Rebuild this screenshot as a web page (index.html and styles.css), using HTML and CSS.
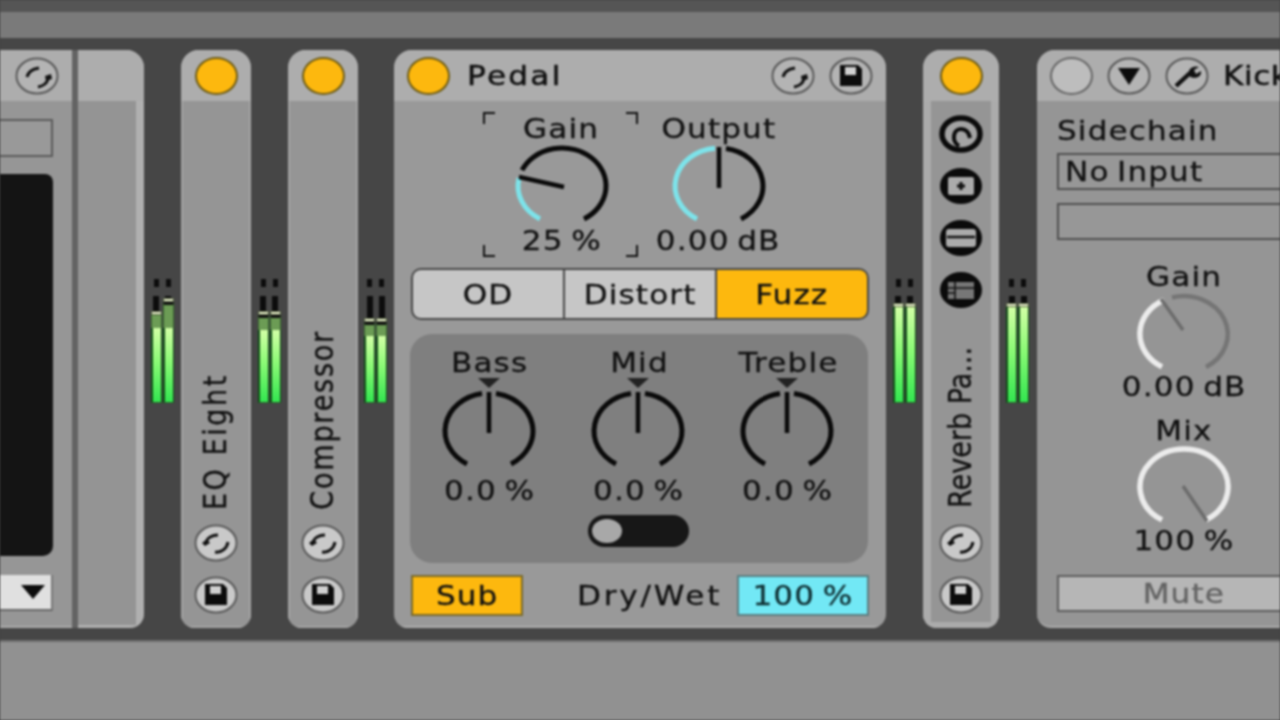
FILE: index.html
```html
<!DOCTYPE html>
<html lang="en">
<head>
<meta charset="utf-8">
<title>Pedal device chain</title>
<link rel="stylesheet" href="styles.css">
</head>
<body>
<svg class="defs" aria-hidden="true">
  <symbol id="swap" viewBox="0 0 44 38">
    <ellipse cx="22" cy="19" rx="20.5" ry="17.5" fill="currentColor" stroke="#5a5a5a" stroke-width="2"/>
    <path d="M12 18C13 14 18 11 24 11" fill="none" stroke="#111" stroke-width="3"/>
    <path d="M21 28C28 29 33 24 34 18" fill="none" stroke="#111" stroke-width="3"/>
    <path d="M8 19l5-4 3 4-5 3z" fill="#111"/>
  </symbol>
  <symbol id="swap2" viewBox="0 0 44 38">
    <ellipse cx="22" cy="19" rx="20.5" ry="17.5" fill="currentColor" stroke="#5a5a5a" stroke-width="2"/>
    <path d="M12 20C13 15 18 12 24 11" fill="none" stroke="#111" stroke-width="3"/>
    <path d="M23 30C28 29 32 26 33 22" fill="none" stroke="#111" stroke-width="3"/>
    <path d="M30 19l6-2 1 5-6 2z" fill="#111"/>
  </symbol>
  <symbol id="save" viewBox="0 0 44 38">
    <ellipse cx="22" cy="19" rx="20.5" ry="17.5" fill="currentColor" stroke="#5a5a5a" stroke-width="2"/>
    <path d="M11 8H29L33 12V29H11Z" fill="#0c0c0c"/>
    <rect x="16" y="10" width="11" height="8" fill="#d0d0d0"/>
  </symbol>
  <symbol id="routing" viewBox="0 0 44 38">
    <ellipse cx="22" cy="19" rx="19" ry="16" fill="#a3a3a3" stroke="#0b0b0b" stroke-width="5.5"/>
    <path d="M20 31C12 26 14 14 22 14C27 14 30 18 31 23" fill="none" stroke="#0b0b0b" stroke-width="4"/>
  </symbol>
  <symbol id="plus" viewBox="0 0 44 38">
    <ellipse cx="22" cy="19" rx="21" ry="18" fill="#0b0b0b"/>
    <rect x="9" y="10" width="26" height="18" rx="2" fill="#ababab"/>
    <path d="M18 19H26M22 15V23" stroke="#111" stroke-width="3"/>
  </symbol>
  <symbol id="minus" viewBox="0 0 44 38">
    <ellipse cx="22" cy="19" rx="21" ry="18" fill="#0b0b0b"/>
    <rect x="7" y="10" width="30" height="18" rx="3" fill="#ababab"/>
    <path d="M8 18H36" stroke="#111" stroke-width="2.4"/>
  </symbol>
  <symbol id="table" viewBox="0 0 44 38">
    <ellipse cx="22" cy="19" rx="21" ry="18" fill="#0b0b0b"/>
    <path d="M9 11H35V28H9Z" fill="#777"/>
    <path d="M9 17H35M9 22H16M16 11V28" stroke="#111" stroke-width="1.6"/>
  </symbol>
  <symbol id="fold" viewBox="0 0 44 38">
    <ellipse cx="22" cy="19" rx="20.5" ry="17.5" fill="currentColor" stroke="#5a5a5a" stroke-width="2"/>
    <path d="M11 11H33L22 28Z" fill="#0c0c0c"/>
  </symbol>
  <symbol id="wrench" viewBox="0 0 44 38">
    <ellipse cx="22" cy="19" rx="20.5" ry="17.5" fill="currentColor" stroke="#5a5a5a" stroke-width="2"/>
    <path d="M11 29L25 16" stroke="#111" stroke-width="4.4"/>
    <path d="M24 19C22 12 28 8 34 10L29 13 31 17 36 14C37 20 30 23 24 19Z" fill="#111"/>
  </symbol>
</svg>

<div class="page">
  <div class="strip-dark"></div>
  <div class="strip-mid"></div>

  <div class="rack">
    <div class="clipped">
      <section class="partial">
        <header class="head head-end"><svg class="icon"><use href="#swap2"/></svg></header>
        <div class="partial-body">
          <div class="partial-field"></div>
          <div class="screen"></div>
          <div class="drop"><span class="drop-arrow"></span></div>
        </div>
      </section>
      <section class="folded">
        <header class="head"></header>
        <div class="folded-body"></div>
      </section>
    </div>

    <div class="slot">
      <div class="meter">
        <div class="ch"><i class="tick"></i><i class="blk" style="height:15px"></i><i class="peak"></i><i class="dim" style="height:13px"></i><i class="lit"></i></div>
        <div class="ch"><i class="tick"></i><i class="blk" style="height:2px"></i><i class="peak"></i><i class="dim dim-top" style="height:26px"></i><i class="lit"></i></div>
      </div>
    </div>

    <section class="strip">
      <header class="head head-center"><span class="power"></span></header>
      <div class="strip-body">
        <span class="vname vname-eq">EQ Eight</span>
        <svg class="icon"><use href="#swap"/></svg>
        <svg class="icon"><use href="#save"/></svg>
      </div>
    </section>

    <div class="slot">
      <div class="meter">
        <div class="ch"><i class="tick"></i><i class="blk" style="height:15px"></i><i class="peak"></i><i class="dim dim-top" style="height:15px"></i><i class="lit"></i></div>
        <div class="ch"><i class="tick"></i><i class="blk" style="height:15px"></i><i class="peak"></i><i class="dim dim-top" style="height:15px"></i><i class="lit"></i></div>
      </div>
    </div>

    <section class="strip">
      <header class="head head-center"><span class="power"></span></header>
      <div class="strip-body">
        <span class="vname">Compressor</span>
        <svg class="icon"><use href="#swap"/></svg>
        <svg class="icon"><use href="#save"/></svg>
      </div>
    </section>

    <div class="slot slot-36">
      <div class="meter">
        <div class="ch"><i class="tick"></i><i class="blk" style="height:22px"></i><i class="peak"></i><i class="dim dim-top" style="height:14px"></i><i class="lit"></i></div>
        <div class="ch"><i class="tick"></i><i class="blk" style="height:22px"></i><i class="peak"></i><i class="dim dim-top" style="height:14px"></i><i class="lit"></i></div>
      </div>
    </div>

    <section class="pedal">
      <header class="head pedal-head">
        <span class="power"></span>
        <span class="title"><span class="t t-left">Pedal</span></span>
        <svg class="icon icon-swap"><use href="#swap2"/></svg>
        <svg class="icon"><use href="#save"/></svg>
      </header>
      <div class="pedal-body">
        <div class="macros">
          <div class="knob-col selected">
            <i class="corner tl"></i><i class="corner tr"></i><i class="corner bl"></i><i class="corner br"></i>
            <div class="lbl"><span class="t">Gain</span></div>
            <svg class="knob" viewBox="0 0 100 86">
              <path class="arc-cyan" d="M28 76.9A44 38 0 0 1 7 36"/>
              <path class="arc-dark" d="M10 28.2A44 38 0 1 1 72 76.9"/>
              <path class="needle" d="M52 45L7 35"/>
            </svg>
            <div class="lbl"><span class="t">25 %</span></div>
          </div>
          <div class="knob-col">
            <div class="lbl"><span class="t">Output</span></div>
            <svg class="knob" viewBox="0 0 100 86">
              <path class="arc-cyan" d="M28 76.9A44 38 0 0 1 46 6.2"/>
              <path class="arc-dark" d="M57 6.5A44 38 0 0 1 72 76.9"/>
              <path class="needle" d="M50 5V46"/>
            </svg>
            <div class="lbl"><span class="t">0.00 dB</span></div>
          </div>
        </div>

        <div class="seg">
          <div class="seg-btn"><span class="t">OD</span></div>
          <div class="seg-btn"><span class="t">Distort</span></div>
          <div class="seg-btn seg-on"><span class="t">Fuzz</span></div>
        </div>

        <div class="eq-panel">
          <div class="eq-row">
            <div class="eq-col">
              <div class="lbl"><span class="t">Bass</span></div>
              <svg class="knob" viewBox="0 0 100 86">
                <path class="marker" d="M39 -9H61L50 1Z"/>
                <path class="arc-dark" d="M28 76.9A44 38 0 0 1 43 6.5"/>
                <path class="arc-dark" d="M57 6.5A44 38 0 0 1 72 76.9"/>
                <path class="needle" d="M50 5V46"/>
              </svg>
              <div class="lbl val"><span class="t">0.0 %</span></div>
            </div>
            <div class="eq-col">
              <div class="lbl"><span class="t">Mid</span></div>
              <svg class="knob" viewBox="0 0 100 86">
                <path class="marker" d="M39 -9H61L50 1Z"/>
                <path class="arc-dark" d="M28 76.9A44 38 0 0 1 43 6.5"/>
                <path class="arc-dark" d="M57 6.5A44 38 0 0 1 72 76.9"/>
                <path class="needle" d="M50 5V46"/>
              </svg>
              <div class="lbl val"><span class="t">0.0 %</span></div>
            </div>
            <div class="eq-col">
              <div class="lbl"><span class="t">Treble</span></div>
              <svg class="knob" viewBox="0 0 100 86">
                <path class="marker" d="M39 -9H61L50 1Z"/>
                <path class="arc-dark" d="M28 76.9A44 38 0 0 1 43 6.5"/>
                <path class="arc-dark" d="M57 6.5A44 38 0 0 1 72 76.9"/>
                <path class="needle" d="M50 5V46"/>
              </svg>
              <div class="lbl val"><span class="t">0.0 %</span></div>
            </div>
          </div>
          <div class="toggle"><span class="toggle-thumb"></span></div>
        </div>

        <div class="foot">
          <div class="sub"><span class="t">Sub</span></div>
          <div class="drywet"><span class="t">Dry/Wet</span></div>
          <div class="pct"><span class="t">100 %</span></div>
        </div>
      </div>
    </section>

    <div class="slot">
      <div class="meter">
        <div class="ch"><i class="tick"></i><i class="blk" style="height:7px"></i><i class="peak"></i><i class="dim" style="height:0"></i><i class="lit"></i></div>
        <div class="ch"><i class="tick"></i><i class="blk" style="height:7px"></i><i class="peak"></i><i class="dim" style="height:0"></i><i class="lit"></i></div>
      </div>
    </div>

    <section class="strip strip-wide">
      <header class="head head-center"><span class="power"></span></header>
      <div class="strip-body">
        <div class="chain-tools">
          <svg class="icon"><use href="#routing"/></svg>
          <svg class="icon"><use href="#plus"/></svg>
          <svg class="icon"><use href="#minus"/></svg>
          <svg class="icon"><use href="#table"/></svg>
        </div>
        <span class="vname vname-tight">Reverb Pa...</span>
        <svg class="icon"><use href="#swap"/></svg>
        <svg class="icon"><use href="#save"/></svg>
      </div>
    </section>

    <div class="slot slot-38">
      <div class="meter">
        <div class="ch"><i class="tick"></i><i class="blk" style="height:7px"></i><i class="peak"></i><i class="dim" style="height:0"></i><i class="lit"></i></div>
        <div class="ch"><i class="tick"></i><i class="blk" style="height:7px"></i><i class="peak"></i><i class="dim" style="height:0"></i><i class="lit"></i></div>
      </div>
    </div>

    <section class="kick">
      <header class="head kick-head">
        <span class="power power-off"></span>
        <svg class="icon"><use href="#fold"/></svg>
        <svg class="icon"><use href="#wrench"/></svg>
        <span class="title"><span class="t t-left">Kick</span></span>
      </header>
      <div class="kick-body">
        <div class="side-lbl"><span class="t t-left">Sidechain</span></div>
        <div class="field"><span class="t t-left">No Input</span></div>
        <div class="field field-empty"></div>
        <div class="kick-col">
          <div class="lbl"><span class="t">Gain</span></div>
          <svg class="knob knob-low" viewBox="0 0 100 85">
            <path class="arc-white" d="M28 76.9A44 38 0 0 1 30 10"/>
            <path class="arc-gray" d="M38 7.5A44 38 0 0 1 72 76.9"/>
            <path class="needle-gray" d="M49 40L27 9"/>
          </svg>
          <div class="lbl"><span class="t">0.00 dB</span></div>
          <div class="lbl lbl-gap"><span class="t">Mix</span></div>
          <svg class="knob" viewBox="0 0 100 86">
            <path class="arc-white" d="M28 76.9A44 38 0 1 1 72 76.9"/>
            <path class="needle-gray" d="M49 43L73 78"/>
          </svg>
          <div class="lbl"><span class="t">100 %</span></div>
        </div>
        <div class="mute"><span class="t">Mute</span></div>
      </div>
    </section>
  </div>

  <div class="lower"></div>
</div>
</body>
</html>
```

FILE: styles.css
```css
* { box-sizing: border-box; }
html, body { margin: 0; padding: 0; }
body { width: 1280px; height: 720px; overflow: hidden; background: #444; }
.defs { display: none; }

.page {
  width: 1280px;
  height: 720px;
  display: flex;
  flex-direction: column;
  overflow: hidden;
  background: #464646;
  color: #111;
  font-family: "DejaVu Sans", sans-serif;
  font-size: 27px;
  letter-spacing: 1px;
  word-spacing: -3px;
  -webkit-text-stroke: 0.3px currentColor;
  filter: blur(0.8px);
}
.strip-dark { height: 12px; background: #555; flex: none; }
.strip-mid { height: 26px; background: #7a7a7a; flex: none; }
.lower { flex: 1; background: #919191; border-top: 2px solid #6e6e6e; }

.rack {
  flex: none;
  height: 602px;
  display: flex;
  padding: 12px 0;
  background: #464646;
}

/* text is horizontally stretched in the source */
.t { display: inline-block; transform: scaleX(1.15); white-space: nowrap; }
.t-left { transform-origin: left center; }

.head {
  flex: none;
  height: 51px;
  display: flex;
  align-items: center;
  background: #adadad;
}
.head-end { justify-content: flex-end; padding-right: 13px; }
.head-center { justify-content: center; }

.icon { display: block; width: 44px; height: 38px; flex: none; color: #c9c9c9; }
.head .icon { color: #b4b4b4; }

.power {
  display: block;
  flex: none;
  width: 43px;
  height: 38px;
  border-radius: 50%;
  background: #fdb80e;
  border: 2px solid #6f5c14;
}
.power-off { background: #bdbdbd; border-color: #666; }

/* left partial device + folded panel */
.clipped { flex: none; display: flex; width: 144px; background: #636363; border-radius: 0 18px 14px 0; }
.partial { width: 72px; display: flex; flex-direction: column; background: #969696; border-bottom: 2px solid #aaa; }
.partial-body { flex: 1; display: flex; flex-direction: column; padding: 18px 19px 15px 0; }
.partial-field { height: 38px; background: #999; border: 2px solid #5a5a5a; border-left: 0; }
.screen { flex: 1; margin-top: 17px; background: #141414; border-radius: 0 8px 10px 0; }
.drop { height: 36px; margin-top: 19px; display: flex; align-items: center; justify-content: flex-end; padding-right: 6px; background: #e0e0e0; border-bottom: 2px solid #666; border-right: 2px solid #777; }
.drop-arrow { width: 0; height: 0; border-style: solid; border-width: 14px 12px 0; border-color: #0c0c0c transparent transparent; }
.folded { width: 66px; margin-left: 6px; display: flex; flex-direction: column; background: #b0b0b0; border-radius: 0 18px 14px 0; overflow: hidden; }
.folded-body { flex: 1; background: #949494; margin-right: 8px; margin-bottom: 3px; }

/* meter slots */
.slot { flex: none; width: 37px; display: flex; justify-content: center; padding-top: 229px; }
.slot-36 { width: 36px; }
.slot-38 { width: 38px; }
.meter { width: 24px; height: 124px; display: flex; gap: 1px; padding-right: 1px; }
.ch { width: 11px; display: flex; flex-direction: column; align-items: center; }
.tick { display: block; flex: none; width: 5px; height: 8px; margin-bottom: 9px; background: #0c0c0c; }
.blk { display: block; flex: none; width: 6px; background: #0c0c0c; }
.peak { display: block; flex: none; width: 11px; height: 4px; background: #f0f6d2; border: 1px solid #4d5a3d; }
.dim { display: block; flex: none; width: 11px; background: #6c9c55; border-left: 1px solid #37682d; border-right: 1px solid #37682d; }
.dim-top { border-top: 3px solid #111; }
.lit {
  display: block;
  flex: 1;
  width: 11px;
  background: linear-gradient(#d2ffa6, #8cfa76 45%, #33e650);
  border-left: 2px solid #0e4d15;
  border-right: 1px solid #0e4d15;
  border-bottom: 1px solid #27662a;
}

/* narrow strips */
.strip { flex: none; width: 70px; display: flex; flex-direction: column; background: #ababab; border-radius: 18px 18px 14px 14px; overflow: hidden; }
.strip-body { flex: 1; display: flex; flex-direction: column; align-items: center; background: #959595; padding-bottom: 12px; gap: 14px; border-left: 2px solid #a4a4a4; border-right: 2px solid #a4a4a4; border-bottom: 2px solid #a4a4a4; }
.strip-wide { width: 76px; }
.strip-wide .strip-body { border-width: 0 8px 6px; border-color: #ababab; padding-bottom: 8px; padding-top: 14px; }
.chain-tools { display: flex; flex-direction: column; gap: 14px; }
.vname { margin-top: auto; display: block; writing-mode: vertical-rl; transform: rotate(180deg) scaleX(1.15); white-space: nowrap; line-height: 30px; letter-spacing: 1.8px; word-spacing: 0; }
.vname-eq { letter-spacing: 2.6px; }
.vname-tight { letter-spacing: 0; margin-bottom: 2px; }

/* pedal */
.pedal { flex: none; width: 492px; display: flex; flex-direction: column; background: #999; border-radius: 18px 18px 14px 14px; overflow: hidden; }
.pedal-head { padding: 0 13px; }
.title { margin-left: 17px; flex: 1; letter-spacing: 2px; -webkit-text-stroke: 0.5px currentColor; }
.icon-swap { margin-right: 14px; }
.pedal-body { flex: 1; padding: 16px 16px 10px; display: flex; flex-direction: column; border-bottom: 2px solid #adadad; }
.macros { display: flex; justify-content: center; height: 135px; }
.knob-col { position: relative; width: 157px; display: flex; flex-direction: column; align-items: center; }
.lbl { height: 24px; line-height: 24px; text-align: center; white-space: nowrap; }
.knob { display: block; flex: none; width: 100px; height: 86px; overflow: visible; fill: none; }
.knob-col .knob { margin-top: 1px; margin-bottom: 1px; }
.knob-low { height: 85px; margin-top: 1px; }
.arc-cyan { stroke: #7de3ea; stroke-width: 5; }
.arc-dark { stroke: #0a0a0a; stroke-width: 5; }
.arc-white { stroke: #ececec; stroke-width: 5.5; }
.arc-gray { stroke: #757575; stroke-width: 4.5; }
.needle { stroke: #0a0a0a; stroke-width: 4.5; }
.needle-gray { stroke: #6c6c6c; stroke-width: 3.5; }
.marker { fill: #222; }
.corner { position: absolute; width: 12px; height: 12px; border: 0 solid #111; }
.tl { left: 0; top: -5px; border-width: 2px 0 0 2px; }
.tr { right: 2px; top: -5px; border-width: 2px 2px 0 0; }
.bl { left: 0; top: 128px; border-width: 0 0 2px 2px; }
.br { right: 2px; top: 128px; border-width: 0 2px 2px 0; }

.seg { height: 52px; margin: 16px 1px 0; display: flex; gap: 2px; background: #474747; border: 2px solid #474747; border-radius: 10px; overflow: hidden; }
.seg-btn { flex: 1; display: flex; align-items: center; justify-content: center; background: #c6c6c6; }
.seg-on { background: #fdb80e; }

.eq-panel { height: 229px; margin-top: 14px; margin-right: 2px; padding-top: 17px; background: #7f7f7f; border-radius: 22px; display: flex; flex-direction: column; align-items: center; }
.eq-row { display: flex; justify-content: center; }
.eq-col { width: 149px; display: flex; flex-direction: column; align-items: center; }
.eq-col .knob { margin-top: 12px; margin-left: -2px; }
.val { margin-top: 6px; }
.toggle { width: 101px; height: 32px; margin-top: 12px; margin-left: -2px; padding-left: 4px; display: flex; align-items: center; background: #171717; border-radius: 16px; }
.toggle-thumb { display: block; width: 30px; height: 24px; border-radius: 50%; background: #a8a8a8; }

.foot { margin-top: 12px; margin-left: 1px; height: 41px; display: flex; align-items: center; }
.sub { width: 112px; height: 41px; display: flex; align-items: center; justify-content: center; background: #fdb80e; border: 2px solid #7a6a2a; }
.drywet { width: 214px; padding-right: 15px; text-align: right; letter-spacing: 2.4px; }
.drywet .t { transform-origin: right center; }
.pct { width: 132px; height: 41px; display: flex; align-items: center; justify-content: center; background: #72e8f5; border: 2px solid #5c7d80; color: #0f2f33; }

/* kick device */
.kick { flex: none; width: 320px; display: flex; flex-direction: column; background: #959595; border-radius: 18px 0 0 14px; overflow: hidden; border-bottom: 2px solid #aaa; }
.kick-head { padding-left: 13px; gap: 14px; }
.kick-head .title { margin-left: 0; letter-spacing: 0.5px; white-space: nowrap; }
.kick-body { flex: 1; padding: 18px 0 0 20px; display: flex; flex-direction: column; align-items: flex-start; }
.side-lbl { height: 24px; line-height: 24px; }
.field { width: 300px; height: 37px; margin-top: 10px; padding-left: 6px; line-height: 33px; background: #979797; border: 2px solid #4f4f4f; }
.field-empty { margin-top: 13px; }
.kick-col { width: 254px; margin-top: 25px; display: flex; flex-direction: column; align-items: center; }
.lbl-gap { margin-top: 20px; }
.mute { width: 300px; height: 37px; margin-top: 22px; padding-right: 46px; display: flex; align-items: center; justify-content: center; background: #b6b6b6; border: 2px solid #5d5d5d; color: #636363; }
```
